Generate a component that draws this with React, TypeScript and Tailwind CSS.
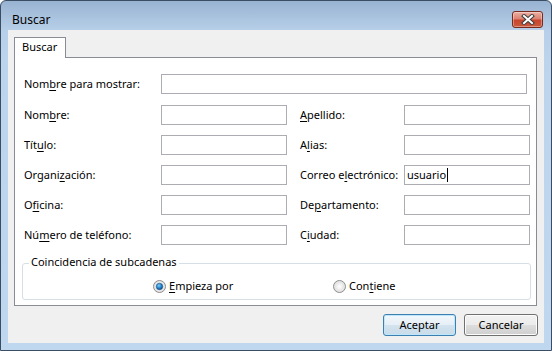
import React from "react";

const FONT = { fontFamily: '"Noto Sans", "Open Sans", sans-serif' };

function U({ children }: { children: React.ReactNode }) {
  return <span className="underline decoration-1 underline-offset-[2px]">{children}</span>;
}

function Field({ w, children }: { w: string; children?: React.ReactNode }) {
  return (
    <div className={`${w} h-[20px] border border-[#abadb3] bg-white flex items-center pl-[2px] text-[11px] leading-[14px]`}>
      {children}
    </div>
  );
}

function Label({ w, children }: { w: string; children: React.ReactNode }) {
  return <div className={`${w} shrink-0 text-[11px] leading-[14px] text-black`}>{children}</div>;
}

function Row({
  l1,
  l2,
  v2,
}: {
  l1: React.ReactNode;
  l2: React.ReactNode;
  v2?: React.ReactNode;
}) {
  return (
    <div className="flex items-center h-[20px]">
      <Label w="w-[137px]">{l1}</Label>
      <Field w="w-[126px]" />
      <div className="w-[13px]" />
      <Label w="w-[104px]">{l2}</Label>
      <Field w="w-[126px]">{v2}</Field>
    </div>
  );
}

function Radio({ checked }: { checked?: boolean }) {
  return (
    <svg width="13" height="13" viewBox="0 0 13 13">
      <defs>
        <radialGradient id={checked ? "rg1" : "rg2"} cx="0.5" cy="0.5" r="0.6">
          <stop offset="0" stopColor="#ffffff" />
          <stop offset="1" stopColor="#d6d6d6" />
        </radialGradient>
        <radialGradient id="dot" cx="0.4" cy="0.35" r="0.7">
          <stop offset="0" stopColor="#7fd1f7" />
          <stop offset="0.6" stopColor="#1f7fc8" />
          <stop offset="1" stopColor="#0c3f78" />
        </radialGradient>
      </defs>
      <circle cx="6.5" cy="6.5" r="6" fill={`url(#${checked ? "rg1" : "rg2"})`} stroke="#8e8f8f" strokeWidth="1" />
      <circle cx="6.5" cy="6.5" r="4.5" fill="none" stroke="#e6e6e6" strokeWidth="1" />
      {checked && <circle cx="6.5" cy="6.5" r="3.2" fill="url(#dot)" stroke="#1b4f86" strokeWidth="0.6" />}
    </svg>
  );
}

export default function App() {
  return (
    <div style={FONT} className="w-[552px] h-[351px] bg-white">
      <div className="w-[552px] h-[351px] flex flex-col border border-[#3b4d63] rounded-t-[6px] bg-[linear-gradient(to_bottom,#98b3d2_0px,#b7cfe8_29px,#bcd4ec_60px,#bfd7ef_100%)] overflow-hidden">
        {/* title bar */}
        <div className="h-[29px] flex items-start shrink-0">
          <div className="ml-[11px] mt-[11px] text-[12px] leading-[16px] text-black">Buscar</div>
          <div className="ml-auto mr-[8px] mt-[10px] w-[31px] h-[17px] rounded-[3px] border border-[#7a2a1c] bg-[linear-gradient(to_bottom,#eab0a3_0%,#dc8271_45%,#c8452d_55%,#c95a3e_100%)] shadow-[inset_0_0_0_1px_rgba(255,255,255,0.35)] flex items-center justify-center">
            <svg width="16" height="11" viewBox="0 0 16 11">
              <path d="M4 2 L12 9 M12 2 L4 9" stroke="#3d3d3d" strokeWidth="4" strokeLinecap="square" />
              <path d="M4 2 L12 9 M12 2 L4 9" stroke="#ffffff" strokeWidth="2" strokeLinecap="square" />
            </svg>
          </div>
        </div>
        {/* client */}
        <div className="ml-[7px] w-[536px] h-[313px] bg-[#f0f0f0] flex flex-col">
          <div className="pl-[6px] pt-[7px]">
            <div className="relative z-10 -mb-px w-[52px] h-[21px] border border-b-0 border-[#898c95] bg-white pl-[7px] pt-[2px] text-[11px] leading-[14px] text-black">
              Buscar
            </div>
            <div className="w-[523px] h-[249px] border border-[#898c95] bg-white flex flex-col">
              <div className="pl-[9px] pt-[16px] flex flex-col">
                <div className="flex items-center h-[20px]">
                  <Label w="w-[137px]">
                    Nom<U>b</U>re para mostrar:
                  </Label>
                  <Field w="w-[366px]" />
                </div>
                <div className="mt-[11px] flex flex-col gap-[10px]">
                  <Row l1={<>Nom<U>b</U>re:</>} l2={<><U>A</U>pellido:</>} />
                  <Row l1={<>Tít<U>u</U>lo:</>} l2={<>A<U>l</U>ias:</>} />
                  <Row
                    l1={<>Organi<U>z</U>ación:</>}
                    l2={<>Correo e<U>l</U>ectrónico:</>}
                    v2={
                      <span className="flex items-center">
                        usuario
                        <span className="inline-block w-px h-[14px] bg-black ml-[1px]" />
                      </span>
                    }
                  />
                  <Row l1={<>O<U>f</U>icina:</>} l2={<>De<U>p</U>artamento:</>} />
                  <Row l1={<>Nú<U>m</U>ero de teléfono:</>} l2={<>C<U>i</U>udad:</>} />
                </div>
              </div>
              <div className="relative ml-[7px] mt-[18px] w-[509px] h-[37px] border border-[#d5dfe5] rounded-[3px]">
                <span className="absolute left-[6px] top-[-9px] bg-white px-[2px] text-[11px] leading-[14px] text-black">
                  Coincidencia de subcadenas
                </span>
                <div className="flex items-center pl-[130px] pt-[15px]">
                  <div className="w-[180px] flex items-center gap-[3px] text-[11px] leading-[14px] text-black">
                    <Radio checked />
                    <span>
                      <U>E</U>mpieza por
                    </span>
                  </div>
                  <div className="flex items-center gap-[3px] text-[11px] leading-[14px] text-black">
                    <Radio />
                    <span>
                      Con<U>t</U>iene
                    </span>
                  </div>
                </div>
              </div>
            </div>
          </div>
          <div className="flex justify-end gap-[8px] pr-[6px] mt-[8px]">
            <div className="w-[73px] h-[22px] rounded-[3px] border border-[#3c7fb1] bg-[linear-gradient(to_bottom,#f2f8fc_0%,#e6eff6_50%,#d3e3ef_51%,#c9dbe9_100%)] shadow-[inset_0_0_0_1px_#bfe6fb] flex items-center justify-center text-[11px] leading-[14px] text-black">
              Aceptar
            </div>
            <div className="w-[74px] h-[22px] rounded-[3px] border border-[#707070] bg-[linear-gradient(to_bottom,#f2f2f2_0%,#ebebeb_50%,#dddddd_51%,#cfcfcf_100%)] shadow-[inset_0_0_0_1px_#fcfcfc] flex items-center justify-center text-[11px] leading-[14px] text-black">
              Cancelar
            </div>
          </div>
        </div>
      </div>
    </div>
  );
}
